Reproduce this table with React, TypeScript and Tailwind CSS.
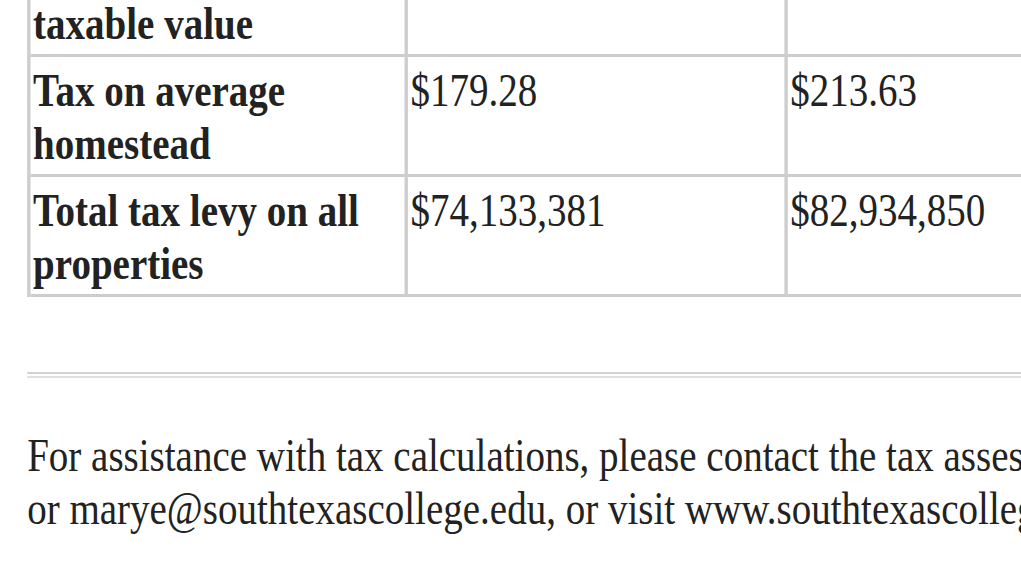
export default function App() {
  const cell =
    "border-r-4 border-b-[3px] border-[#cdcdcd] px-[3px] pt-[7px] pb-[3px] leading-[53.5px]";
  return (
    <div className="w-[1021px] h-[578px] overflow-hidden bg-white">
      <div className="w-[1500px] origin-top-left scale-x-[0.848] pl-[32px] text-[46px] text-[#222] font-['Liberation_Serif','Times_New_Roman',serif]">
        <div className="-mt-[10px] grid w-max grid-cols-[445px_448px_448px] border-l-4 border-[#cdcdcd]">
          <div className={`${cell} font-bold`}>taxable value</div>
          <div className={cell}></div>
          <div className={cell}></div>

          <div className={`${cell} font-bold`}>Tax on average homestead</div>
          <div className={cell}>$179.28</div>
          <div className={cell}>$213.63</div>

          <div className={`${cell} font-bold`}>Total tax levy on all properties</div>
          <div className={cell}>$74,133,381</div>
          <div className={cell}>$82,934,850</div>
        </div>

        <div className="mt-[75px] h-[6px] w-[1400px] border-t-2 border-b-2 border-t-[#d2d2d2] border-b-[#e0e0e0]" />

        <p className="mt-[51px] whitespace-nowrap leading-[53px]">
          For assistance with tax calculations, please contact the tax assessor
          <br />
          or marye@southtexascollege.edu, or visit www.southtexascollege.edu.
        </p>
      </div>
    </div>
  );
}
